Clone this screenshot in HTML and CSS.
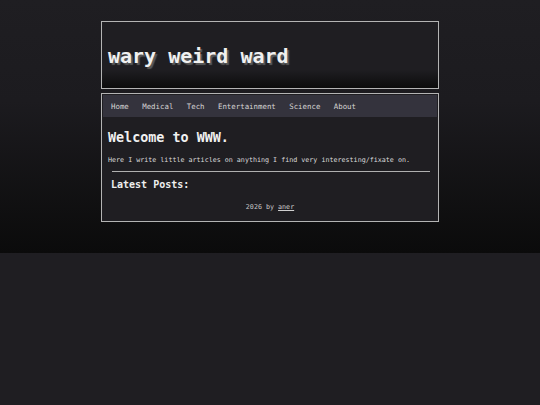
FILE: index.html
```html
<!DOCTYPE html>
<html>
<head>
<meta charset="utf-8">
<link rel="stylesheet" href="styles.css">
</head>
<body>
<header class="masthead">
  <div class="site-title">wary weird ward</div>
</header>
<main class="panel">
  <nav class="nav">
    <a href="#">Home</a>
    <a href="#">Medical</a>
    <a href="#">Tech</a>
    <a href="#">Entertainment</a>
    <a href="#">Science</a>
    <a href="#">About</a>
  </nav>
  <section class="intro">
    <h1 class="welcome">Welcome to WWW.</h1>
    <p class="lead">Here I write little articles on anything I find very interesting/fixate on.</p>
  </section>
  <hr class="rule">
  <h2 class="latest">Latest Posts:</h2>
  <footer class="foot">2026 by <a href="#">aner</a></footer>
</main>
</body>
</html>
```
FILE: styles.css
```css
html {
  background: #1f1e22;
}
body {
  margin: 0;
  padding: 21px 0 31px;
  background: linear-gradient(to bottom, #1f1e22 0%, #1c1b1f 40%, #0b0b0b 100%);
  font-family: "DejaVu Sans Mono", monospace;
  color: #e8e8e8;
}
.masthead {
  width: 330px;
  margin: 0 auto;
  border: 1px solid #b4b4b4;
  padding: 22px 0 20px 6px;
  background: linear-gradient(to bottom, #1f1e22 0%, #1f1e22 72%, #0c0c0c 100%);
}
.site-title {
  font-size: 20px;
  line-height: 24px;
  font-weight: bold;
  color: #f0f0f0;
  text-shadow: 2px 2px 1px #5a5a5a;
}
.panel {
  display: block;
  width: 334px;
  margin: 4px auto 0;
  border: 1px solid #b4b4b4;
  padding: 1px 1px 10px;
  background: #1f1e22;
}
.nav {
  display: flex;
  gap: 13.4px;
  align-items: center;
  height: 21px;
  padding: 1px 0 0 8px;
  background: #34333d;
  font-size: 7.4px;
}
.nav a {
  color: #d4d4d4;
  text-decoration: none;
}
.intro {
  padding-left: 5px;
}
.welcome {
  margin: 13px 0 0;
  font-size: 13.4px;
  line-height: 16px;
  font-weight: bold;
  color: #f0f0f0;
}
.lead {
  margin: 10px 0 0;
  font-size: 6.7px;
  line-height: 8px;
  color: #dcdcdc;
}
.rule {
  margin: 7px 7px 0 9px;
  border: 0;
  border-top: 1px solid #b0b0b0;
  height: 0;
}
.latest {
  margin: 7px 0 0 8px;
  font-size: 10px;
  line-height: 12px;
  font-weight: bold;
  color: #eeeeee;
}
.foot {
  margin-top: 12px;
  text-align: center;
  font-size: 6.7px;
  line-height: 8px;
  color: #c8c8c8;
}
.foot a {
  color: #cfcfcf;
}
```
